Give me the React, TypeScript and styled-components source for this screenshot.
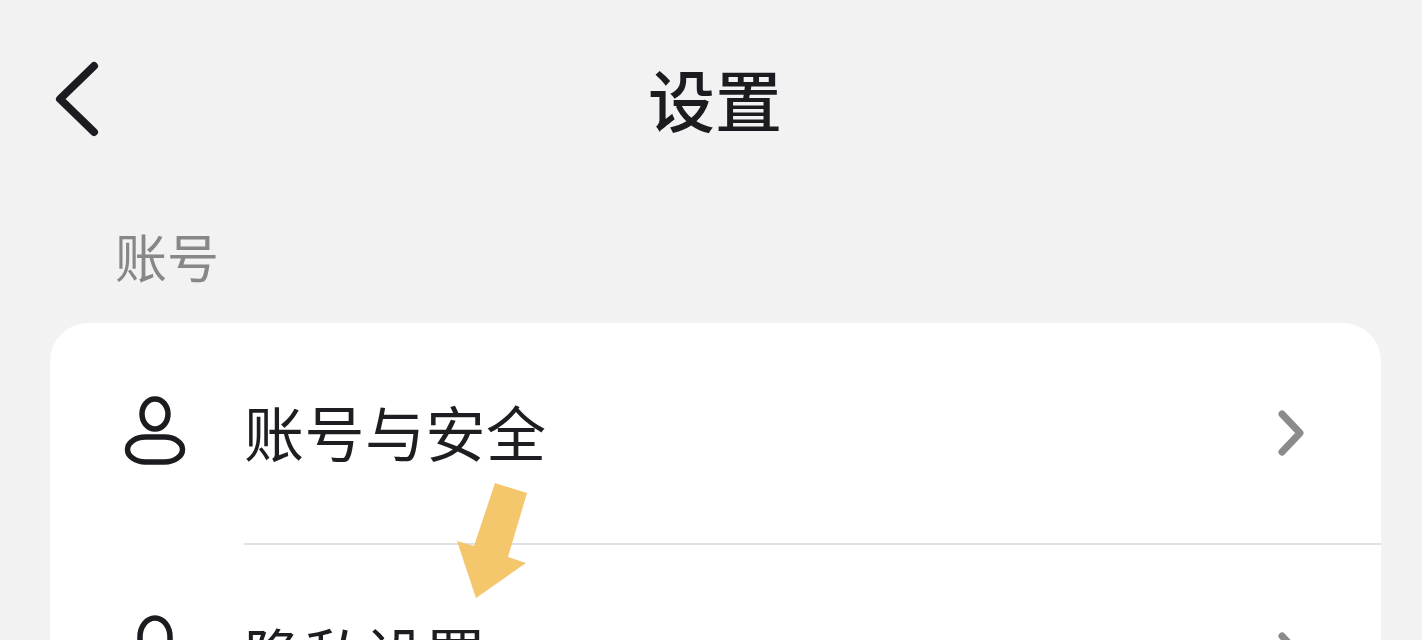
import React from "react";
import styled, { createGlobalStyle } from "styled-components";

const Global = createGlobalStyle`
  html, body { margin: 0; padding: 0; background: #f2f2f3; }
  body { width: 1422px; height: 640px; overflow: hidden; font-family: "Noto Sans CJK SC", "Noto Sans", sans-serif; }
`;

const Page = styled.div`
  position: relative;
  width: 1422px;
  height: 640px;
  overflow: hidden;
  padding: 0 41px 0 50px;
  box-sizing: border-box;
  background: #f2f2f3;
`;

const Header = styled.header`
  height: 204px;
  margin-left: -50px;
  margin-right: -41px;
  display: flex;
  align-items: flex-start;
  justify-content: center;
  position: relative;
`;

const BackButton = styled.button`
  position: absolute;
  left: 50px;
  top: 56px;
  width: 56px;
  height: 86px;
  padding: 0;
  border: 0;
  background: none;
  display: block;
`;

const Title = styled.h1`
  margin: 0 0 0 8px;
  font-size: 67px;
  line-height: 196px;
  font-weight: 500;
  color: #1b1b20;
`;

const SectionLabel = styled.div`
  padding-left: 65px;
  height: 119px;
  font-size: 52px;
  line-height: 104px;
  color: #87878a;
`;

const Card = styled.section`
  background: #fff;
  border-radius: 38px 38px 0 0;
`;

const Row = styled.div`
  display: flex;
  align-items: center;
  height: 222px;
`;

const IconSlot = styled.div`
  width: 194px;
  flex: none;
  display: flex;
  justify-content: center;
  padding-left: 15px;
  box-sizing: border-box;
`;

const PersonIcon = styled.svg`
  margin-top: -6px;
`;

const LockIcon = styled.svg`
  margin-top: -10px;
`;

const Body = styled.div<{ $divider?: boolean }>`
  flex: 1;
  height: 100%;
  display: flex;
  align-items: center;
  justify-content: space-between;
  padding-right: 75px;
  border-bottom: 2px solid ${(p) => (p.$divider ? "#e1e1e3" : "transparent")};
  box-sizing: border-box;
`;

const RowText = styled.span`
  font-size: 60px;
  line-height: 76px;
  margin-top: -4px;
  color: #1d1d22;
  letter-spacing: 0.5px;
`;

const ChevronIcon = styled.svg`
  margin-top: 2px;
`;

const Arrow = styled.svg`
  position: absolute;
  left: 450px;
  top: 476px;
`;

const Chevron = () => (
  <ChevronIcon width="30" height="50" viewBox="0 0 30 50" fill="none">
    <path d="M6 5 L24 24 L6 43" stroke="#8b8b8d" strokeWidth="7" strokeLinecap="round" strokeLinejoin="round" />
  </ChevronIcon>
);

export default function App() {
  return (
    <Page>
      <Global />
      <Header>
        <BackButton aria-label="返回">
          <svg width="56" height="86" viewBox="0 0 56 86" fill="none">
            <path d="M44 10 L10 43 L44 76" stroke="#1b1b20" strokeWidth="8" strokeLinecap="round" strokeLinejoin="round" />
          </svg>
        </BackButton>
        <Title>设置</Title>
      </Header>
      <SectionLabel>账号</SectionLabel>
      <Card>
        <Row>
          <IconSlot>
            <PersonIcon width="64" height="72" viewBox="0 0 64 72" fill="none">
              <ellipse cx="32" cy="19" rx="13" ry="15" stroke="#1b1b20" strokeWidth="5.5" />
              <rect x="4.5" y="42" width="55" height="25" rx="18" ry="12.5" stroke="#1b1b20" strokeWidth="5.5" />
            </PersonIcon>
          </IconSlot>
          <Body $divider>
            <RowText>账号与安全</RowText>
            <Chevron />
          </Body>
        </Row>
        <Row>
          <IconSlot>
            <LockIcon width="64" height="72" viewBox="0 0 64 72" fill="none">
              <path d="M17 44 V22 a15 19 0 0 1 30 0 V44" stroke="#1b1b20" strokeWidth="5.5" />
            </LockIcon>
          </IconSlot>
          <Body>
            <RowText>隐私设置</RowText>
            <Chevron />
          </Body>
        </Row>
      </Card>
      <Arrow width="90" height="130" viewBox="450 476 90 130">
        <polygon points="495,483 527,493 508,557 526,563 476,598 457,541 474,546" fill="#f4c76c" />
      </Arrow>
    </Page>
  );
}
